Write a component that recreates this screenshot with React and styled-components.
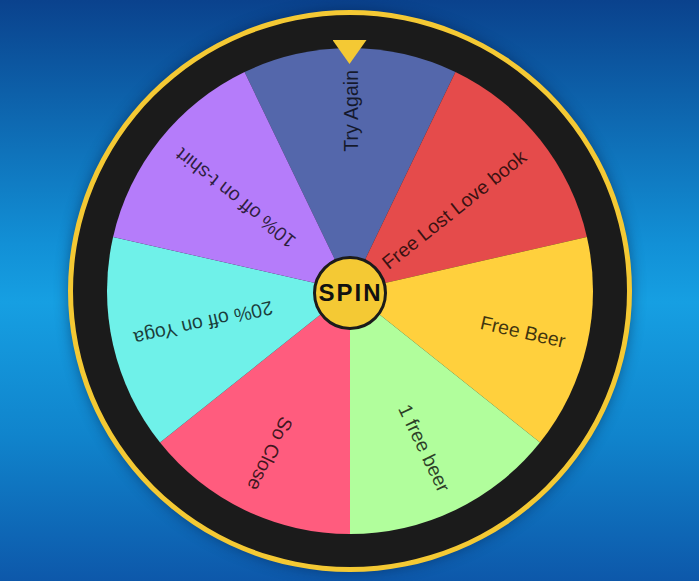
import styled, { createGlobalStyle } from "styled-components";

const prizes = [
  { label: "Try Again", color: "#5467ab" },
  { label: "Free Lost Love book", color: "#e54b4b" },
  { label: "Free Beer", color: "#ffd03d" },
  { label: "1 free beer", color: "#b1fe9c" },
  { label: "So Close", color: "#ff5c7e" },
  { label: "20% off on Yoga", color: "#6ff1e9" },
  { label: "10% off on t-shirt", color: "#b57cfa" },
];

const RADIUS = 243;
const SLICE = 360 / prizes.length;

function point(deg, r) {
  const rad = (deg * Math.PI) / 180;
  return [r * Math.sin(rad), -r * Math.cos(rad)];
}

function slicePath(i) {
  const start = i * SLICE - SLICE / 2;
  const end = start + SLICE;
  const [x1, y1] = point(start, RADIUS);
  const [x2, y2] = point(end, RADIUS);
  return `M0,0 L${x1},${y1} A${RADIUS} ${RADIUS} 0 0 1 ${x2} ${y2} Z`;
}

export default function App() {
  return (
    <>
      <GlobalStyle />
      <Stage>
        <WheelFrame>
          <WheelSvg viewBox={`${-RADIUS} ${-RADIUS} ${RADIUS * 2} ${RADIUS * 2}`}>
            {prizes.map((prize, i) => (
              <path key={prize.label} d={slicePath(i)} fill={prize.color} />
            ))}
            {prizes.map((prize, i) => (
              <Label
                key={prize.label + "-t"}
                x={221}
                y={1}
                textAnchor="end"
                dominantBaseline="central"
                transform={`rotate(${i * SLICE - 90})`}
              >
                {prize.label}
              </Label>
            ))}
          </WheelSvg>
          <Pointer />
          <SpinButton>SPIN</SpinButton>
        </WheelFrame>
      </Stage>
    </>
  );
}

const GlobalStyle = createGlobalStyle`
  html, body {
    margin: 0;
    padding: 0;
    height: 100%;
  }
  body {
    overflow: hidden;
    font-family: "Liberation Sans", Arial, sans-serif;
    background: linear-gradient(180deg, #0a428d 0%, #1290d6 42%, #169fe2 52%, #1084cc 75%, #0d58aa 100%);
  }
`;

const Stage = styled.div`
  height: 581px;
  box-sizing: border-box;
  padding-top: 10px;
  display: flex;
  justify-content: center;
`;

const WheelFrame = styled.div`
  position: relative;
  width: 564px;
  height: 562px;
  box-sizing: border-box;
  border-radius: 50%;
  border: 5px solid #f4c934;
  background: #1b1b1b;
  box-shadow: 0 0 14px rgba(0, 20, 60, 0.45);
  display: flex;
  align-items: center;
  justify-content: center;
`;

const WheelSvg = styled.svg`
  width: 486px;
  height: 486px;
  display: block;
`;

const Label = styled.text`
  font-family: "Liberation Sans", Arial, sans-serif;
  font-size: 19.5px;
  fill: rgba(0, 0, 0, 0.75);
`;

const Pointer = styled.div`
  position: absolute;
  top: 25px;
  left: 50%;
  transform: translateX(-50%);
  width: 34px;
  height: 24px;
  background: #f4c934;
  clip-path: polygon(0 0, 100% 0, 50% 100%);
`;

const SpinButton = styled.button`
  position: absolute;
  top: 50%;
  left: 50%;
  transform: translate(-50%, -50%);
  width: 74px;
  height: 74px;
  margin-top: 2px;
  border-radius: 50%;
  border: 3px solid #1b1b1b;
  background: #f4c934;
  color: #111;
  font-family: "Liberation Sans", Arial, sans-serif;
  font-weight: bold;
  font-size: 24px;
  letter-spacing: 2px;
  padding: 0 0 0 2px;
  display: flex;
  align-items: center;
  justify-content: center;
  cursor: pointer;
`;
